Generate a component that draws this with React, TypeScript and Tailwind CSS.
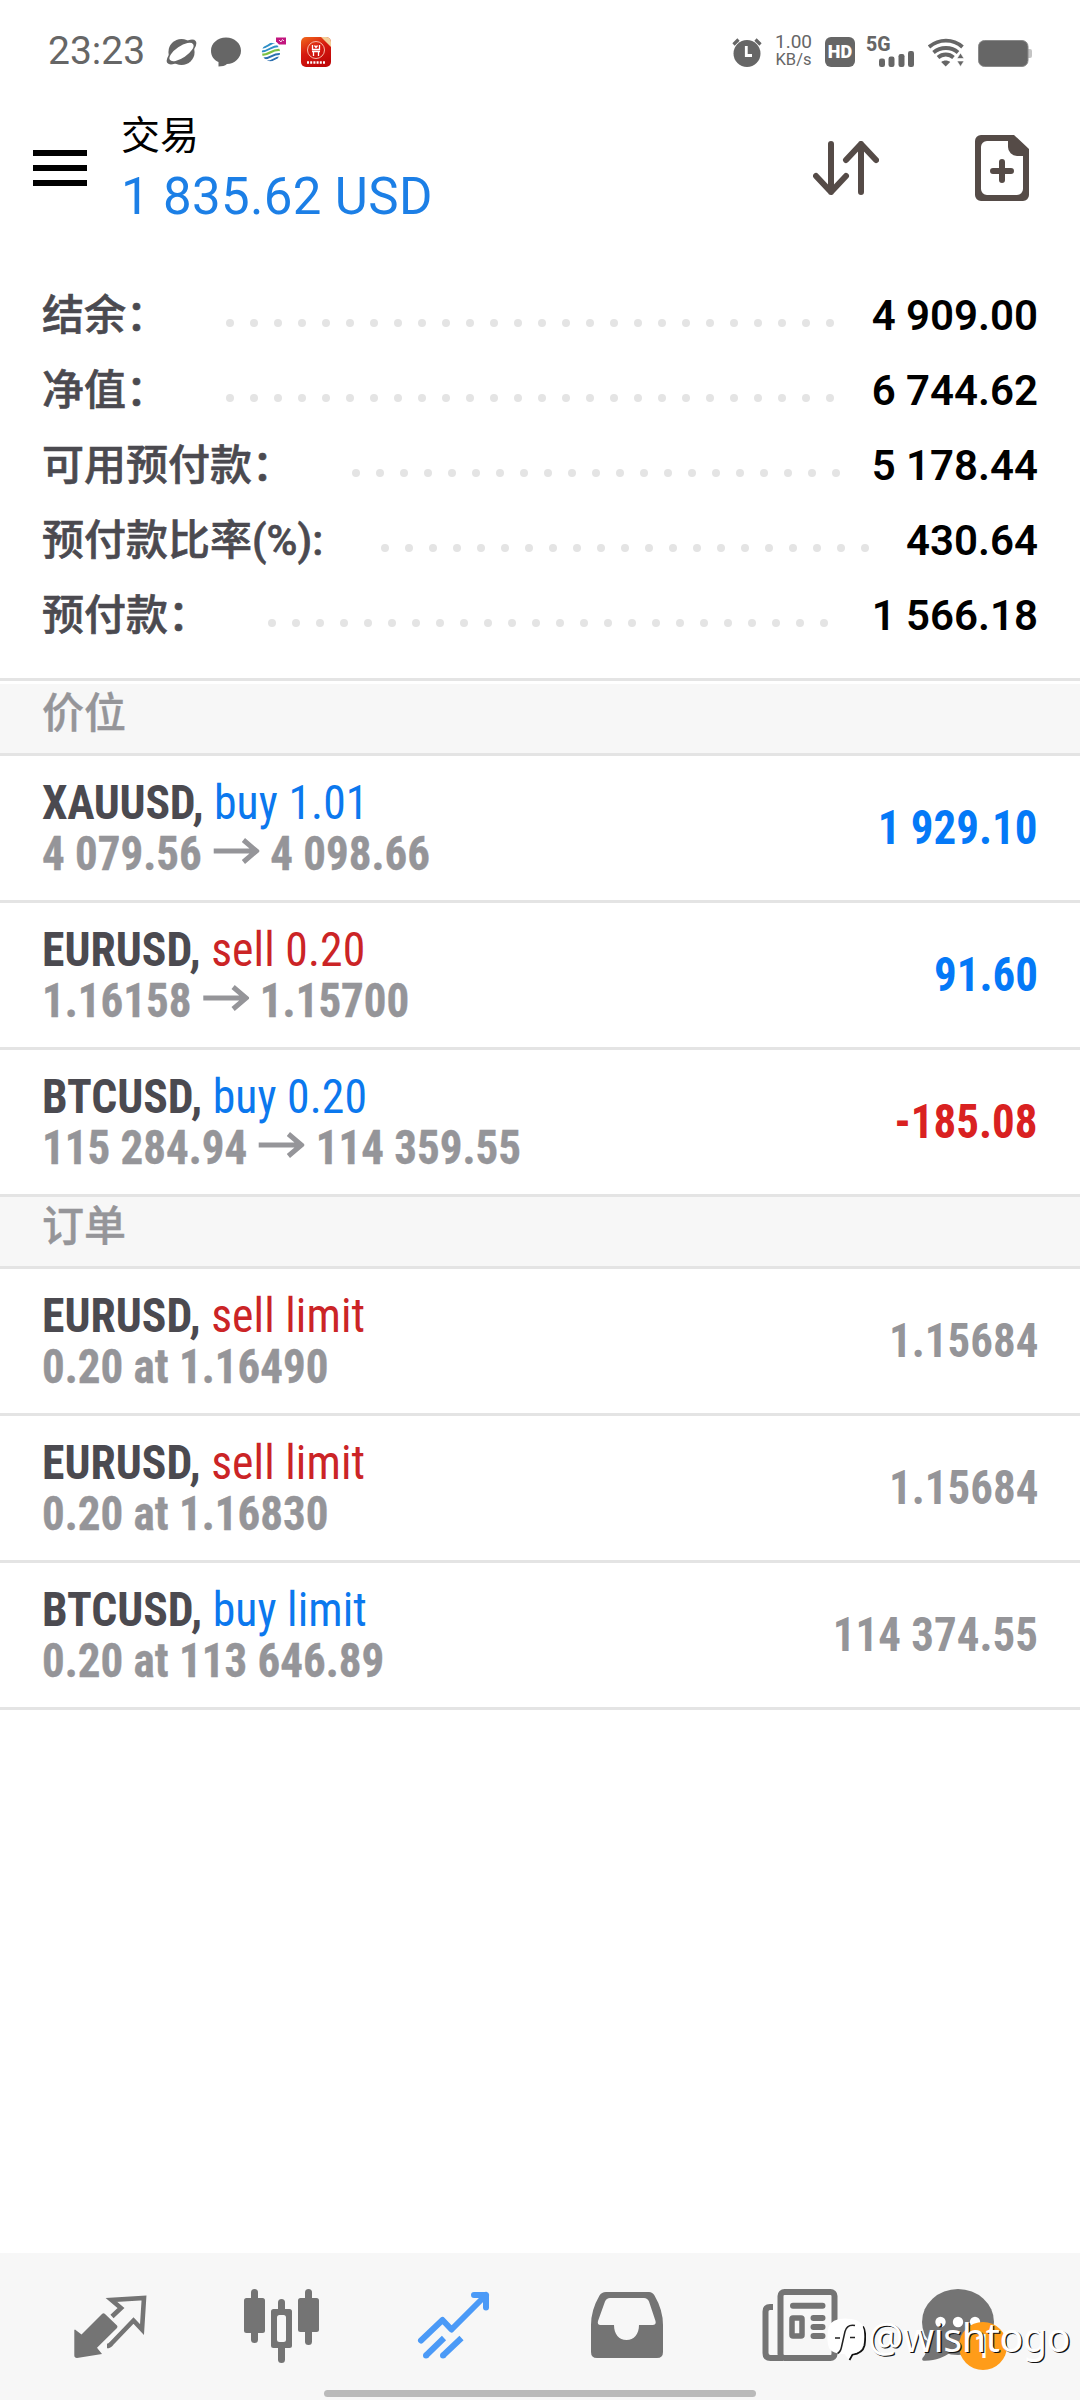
import React from 'react';

type Side = 'buy' | 'sell';

interface SummaryItem {
  label: string;
  value: string;
}

interface Position {
  symbol: string;
  side: Side;
  volume: string;
  open: string;
  current: string;
  profit: string;
}

interface Order {
  symbol: string;
  side: Side;
  details: string;
  price: string;
}

const summary: SummaryItem[] = [
  { label: '结余：', value: '4 909.00' },
  { label: '净值：', value: '6 744.62' },
  { label: '可用预付款：', value: '5 178.44' },
  { label: '预付款比率(%):', value: '430.64' },
  { label: '预付款：', value: '1 566.18' },
];

const positions: Position[] = [
  { symbol: 'XAUUSD', side: 'buy', volume: '1.01', open: '4 079.56', current: '4 098.66', profit: '1 929.10' },
  { symbol: 'EURUSD', side: 'sell', volume: '0.20', open: '1.16158', current: '1.15700', profit: '91.60' },
  { symbol: 'BTCUSD', side: 'buy', volume: '0.20', open: '115 284.94', current: '114 359.55', profit: '-185.08' },
];

const orders: Order[] = [
  { symbol: 'EURUSD', side: 'sell', details: '0.20 at 1.16490', price: '1.15684' },
  { symbol: 'EURUSD', side: 'sell', details: '0.20 at 1.16830', price: '1.15684' },
  { symbol: 'BTCUSD', side: 'buy', details: '0.20 at 113 646.89', price: '114 374.55' },
];

const sideColor: Record<Side, string> = {
  buy: 'text-[#0b78ee]',
  sell: 'text-[#cb2426]',
};

const StatusBar: React.FC = () => (
  <div className="flex h-[103px] items-center justify-between pl-12 pr-12 text-[#666666]">
    <div className="flex items-center">
      <span className="w-[118px] text-[39px] leading-none">23:23</span>
      <svg className="mr-[14px] h-[30px] w-[31px]" viewBox="0 0 32 30">
        <circle cx="16" cy="15" r="13.5" fill="#666" />
        <ellipse cx="16" cy="15" rx="18.5" ry="7.500" fill="#666" transform="rotate(-38 16 15)" />
        <ellipse cx="16" cy="15" rx="14.5" ry="6" fill="#fff" transform="rotate(-34 16 15)" />
      </svg>
      <svg className="mr-5 h-[30px] w-[30px]" viewBox="0 0 30 30">
        <path d="M15 .5C23.500.5 30 6.500 30 13.700S23.500 27 16 27c-2 1.800-5 2.500-8.500 2.500V25C3 23 0 19 0 13.700 0 6.500 6.500.5 15 .5z" fill="#666" />
      </svg>
      <svg className="mr-[14px] h-[30px] w-[26px]" viewBox="0 0 26 30">
        <defs>
          <clipPath id="globe">
            <circle cx="10" cy="15" r="9.200" />
          </clipPath>
        </defs>
        <g fill="none" strokeWidth="2" clipPath="url(#globe)">
          <path d="M0 11c7 0 7-5 16-6M0 14.500c9 0 9-6 19-5.500" stroke="#2f8fc6" />
          <path d="M0 18c10 0 10-6.500 20-5" stroke="#7cc043" strokeWidth="2.400" />
          <path d="M2 21.500c9 0 9-5.500 18-4.500M6 24.500c6 0 7-4 13-4" stroke="#2b6fb0" />
        </g>
        <path d="M15 .5h10v7H18l-3-3z" fill="#c2157e" />
        <path d="M18 3l2 2 1.500-2.500L23 4" stroke="#fff" strokeWidth=".8" fill="none" />
      </svg>
      <svg className="h-[30px] w-[30px]" viewBox="0 0 30 30">
        <defs>
          <linearGradient id="bank" x1="0" y1="0" x2=".5" y2="1">
            <stop offset="0" stopColor="#f26a1b" />
            <stop offset=".5" stopColor="#d61a10" />
            <stop offset="1" stopColor="#c00808" />
          </linearGradient>
        </defs>
        <rect width="30" height="30" rx="5" fill="url(#bank)" />
        <path d="M20 0h5a5 5 0 015 5v5z" fill="#f3cf9a" />
        <circle cx="15" cy="13" r="8.500" fill="none" stroke="#f8b9a8" strokeWidth="1" />
        <path d="M11.500 8v4.500h7V8M13.500 8.500l1.500 2 1.500-2M11 14.500h8M12.500 14.500v4.500M17.500 14.500v4.500" fill="none" stroke="#fff" strokeWidth="1.300" />
        <path d="M6 25.500h18" stroke="#fff" strokeWidth="2.600" strokeDasharray="2 1.200" />
      </svg>
    </div>

    <div className="flex items-center">
      <svg className="mr-[13px] h-[30px] w-[30px]" viewBox="0 0 30 30">
        <circle cx="15" cy="16.500" r="13.500" fill="#666" />
        <path d="M1.500 7.500l5-5M28.500 7.500l-5-5" stroke="#666" strokeWidth="3.200" />
        <path d="M14.300 9v9.500H20" fill="none" stroke="#fff" strokeWidth="2.800" />
      </svg>
      <div className="mr-[13px] flex w-[37px] flex-col items-center">
        <span className="text-[19px] leading-[16px]">1.00</span>
        <span className="text-[16.500px] leading-[19px]">KB/s</span>
      </div>
      <div className="mr-3 flex h-[30px] w-[30px] items-center justify-center rounded-[6px] bg-[#666666] text-[18px] font-black leading-none text-white">
        HD
      </div>
      <div className="relative mr-[14px] h-[30px] w-[47px]">
        <span className="absolute -left-px top-0 text-[19.500px] font-extrabold leading-[16px]">5G</span>
        <svg className="h-[30px] w-[47px]" viewBox="0 0 47 30">
          <g fill="#666">
            <rect x="12" y="21.500" width="6" height="8.500" rx="2.200" />
            <rect x="21.500" y="19.500" width="6" height="10.500" rx="2.200" />
            <rect x="31.500" y="17" width="6" height="13" rx="2.200" />
            <rect x="41" y="14" width="6" height="16" rx="2.200" />
          </g>
        </svg>
      </div>
      <svg className="mr-[14px] h-[30px] w-[36px]" viewBox="0 0 36 30">
        <g fill="none" stroke="#666" strokeWidth="3.800">
          <path d="M1 10C11 1.500 25 1.500 34.500 10" />
          <path d="M5.500 15.500c7-6 18-6 24.500 0" />
          <path d="M10 20.500c4.500-4 11-4 15.500 0" />
        </g>
        <path d="M17.700 29.500l-4.500-4.500c2.500-2 6.500-2 9 0z" fill="#666" />
        <path d="M28 19.500h9v11h-9z" fill="#fff" />
        <path d="M32.500 16l3.500 5.500h-7zM32.500 29.500l3.500-5.500h-7z" fill="#666" stroke="#fff" strokeWidth=".6" />
      </svg>
      <svg className="h-[30px] w-[54px]" viewBox="0 0 54 30">
        <path d="M50 12h2a2 2 0 012 2v5a2 2 0 01-2 2h-2z" fill="#c4c4c4" />
        <rect x="0.500" y="3.500" width="49.500" height="26" rx="6" fill="#666" stroke="#8a8a8a" />
      </svg>
    </div>
  </div>
);

const Header: React.FC = () => (
  <header className="flex h-[130px] items-center pl-[33px] pr-[51px]">
    <button className="flex w-[54px] flex-col gap-[9px]" aria-label="Menu">
      <span className="h-[6px] w-full bg-black" />
      <span className="h-[6px] w-full bg-black" />
      <span className="h-[6px] w-full bg-black" />
    </button>
    <div className="ml-[34px] flex-1">
      <h1 className="text-[39px] leading-[57px] text-black">交易</h1>
      <p className="text-[51px] leading-[63px] tracking-[0.35px] text-[#1c7fe6]">1 835.62 USD</p>
    </div>
    <svg className="mr-24 h-[54px] w-[66px]" viewBox="0 0 66 54" fill="none" stroke="#554b47" strokeWidth="6" strokeLinecap="round" strokeLinejoin="round">
      <path d="M18 3v48M3 35l15 16 15-16M48 51V3M33 19L48 3l15 16" />
    </svg>
    <svg className="h-[66px] w-[54px]" viewBox="0 0 54 66">
      <path
        fillRule="evenodd"
        fill="#554b47"
        d="M6 0h33l15 14v46a6 6 0 01-6 6H6a6 6 0 01-6-6V6a6 6 0 016-6zm6 6a6 6 0 00-6 6v42a6 6 0 006 6h30a6 6 0 006-6V21h-6a9 9 0 01-9-9V6z"
      />
      <path d="M18 36h18M27 27v18" stroke="#554b47" strokeWidth="6" strokeLinecap="round" />
    </svg>
  </header>
);

const SummaryRow: React.FC<SummaryItem> = ({ label, value }) => (
  <div className="flex h-[75px] text-[42px] leading-[75px]">
    <span className="font-medium text-[#4b4a50] [-webkit-text-stroke:0.6px_#4b4a50]">{label}</span>
    {/* dots wrap onto a hidden second line, so only whole ones show */}
    <div className="ml-[58px] mr-[23px] mt-[41px] flex h-2 flex-1 flex-wrap gap-x-4 gap-y-4 overflow-hidden">
      {Array.from({ length: 30 }, (_, i) => (
        <span key={i} className="h-2 w-2 rounded-full bg-[#e4e4e4]" />
      ))}
    </div>
    <span className="font-semibold text-black">{value}</span>
  </div>
);

const SectionTitle: React.FC<{ children: React.ReactNode }> = ({ children }) => (
  <h2 className="h-[72px] border-b-[3px] border-[#e4e4e4] bg-[#f7f7f7] px-[42px] pt-[6px] text-[42px] font-medium leading-[48px] text-[#959599] [-webkit-text-stroke:0.4px_#959599]">
    {children}
  </h2>
);

interface RowProps {
  symbol: string;
  side: Side;
  action: string;
  value: string;
  valueColor: string;
  children: React.ReactNode;
}

const Row: React.FC<RowProps> = ({ symbol, side, action, value, valueColor, children }) => (
  <div className="flex h-[147px] items-center justify-between border-b-[3px] border-[#e4e4e4] px-[42px] font-['Roboto_Condensed'] text-[48px] font-bold leading-[51px]">
    <div>
      <p className="origin-left scale-x-[0.951] text-[#4b4a50]">
        <span className={symbol.startsWith('XAU') ? 'tracking-[-0.3px]' : ''}>{symbol},</span>{' '}
        <span className={`font-normal tracking-[0.1px] ${sideColor[side]}`}>{action}</span>
      </p>
      <p className="flex origin-left scale-x-[0.937] text-[#959599] [-webkit-text-stroke:0.4px_#959599]">{children}</p>
    </div>
    <span className={`mb-[2px] origin-right scale-x-[0.937] ${valueColor}`}>{value}</span>
  </div>
);

const RightArrow: React.FC = () => (
  <svg className="mx-3 h-[46px] w-[49px]" viewBox="0 0 46 46" preserveAspectRatio="none" fill="none" stroke="#959599" strokeWidth="5">
    <path d="M0 23h43M30 12l13 11-13 11" />
  </svg>
);

const NavBar: React.FC = () => (
  <nav className="relative flex h-[147px] justify-between bg-[#f7f7f7] px-[65px] pt-7">
    <svg className="h-[90px] w-[90px]" viewBox="0 0 90 90">
      <path d="M10 48.500l6.500 5L37 33q1.500-1.500 3 0l12 11.500q1 1.200 0 2.400L32 66.700l5 6.300L12 77q-2.700 0-2.700-2.700V49z" fill="#747474" />
      <path d="M47 35.500l9-8.500-9.500-8L79 17l-2 31.500-8.500-9L46.500 62.500q-2 2.500-4.500 2.500" fill="none" stroke="#747474" strokeWidth="4.600" />
    </svg>
    <svg className="h-[90px] w-[90px]" viewBox="0 0 90 90" fill="#747474">
      <rect x="14" y="8" width="7" height="54" rx="3.500" />
      <rect x="7" y="17" width="21" height="35" rx="2.500" />
      <rect x="68" y="8" width="7" height="56" rx="3.500" />
      <rect x="61" y="17" width="21" height="34" rx="2.500" />
      <rect x="41" y="18" width="7" height="64" rx="3.500" />
      <rect x="34" y="28" width="21" height="39" rx="2.500" />
      <rect x="40" y="34" width="9" height="27" rx="2.500" fill="#f7f7f7" />
    </svg>
    <svg className="h-[90px] w-[90px]" viewBox="0 0 90 90" fill="none" stroke="#4b9af7" strokeWidth="6">
      <path d="M12 59.500L33.500 39l9 9.500L77 14M65 14h12v12.500" strokeLinecap="round" strokeLinejoin="round" />
      <path d="M35 57L17 74.500M52.500 57L34 74.500" />
      <circle cx="17" cy="74.500" r="3" fill="#4b9af7" stroke="none" />
      <circle cx="34" cy="74.500" r="3" fill="#4b9af7" stroke="none" />
    </svg>
    <svg className="h-[90px] w-[90px]" viewBox="0 0 90 90">
      <path
        fillRule="evenodd"
        fill="#747474"
        d="M25 11h43q3.500 0 5.500 3.500Q82 29 82 44v27q0 6-6 6H16q-6 0-6-6V44q0-15 8.500-29.500Q20.500 11 25 11zM29 17q-3.500 0-5 3.500L17 40q-1 4 2.500 4H33c0 9 5 15 12.500 15S58 53 58 44h13.500q4 0 3-4l-6.500-19.500Q66.500 17 63 17z"
      />
    </svg>
    <svg className="h-[90px] w-[90px]" viewBox="0 0 90 90" fill="none" stroke="#747474" strokeWidth="6">
      <rect x="27.500" y="11" width="54" height="66" rx="4" />
      <path d="M20 26h-3q-4.500 0-4.500 4.500V72q0 5 5 5H30" />
      <path d="M40 24.800h29.500M60.500 37h9M60.500 46h9M60.500 55h9" strokeLinecap="round" />
      <rect x="39" y="37" width="10" height="18" rx="1" strokeWidth="5.500" />
    </svg>
    <div className="relative h-[90px] w-[90px]">
      <svg className="h-[90px] w-[90px] overflow-visible" viewBox="0 0 90 90">
        <ellipse cx="33" cy="41" rx="36" ry="33" fill="#747474" />
        <path d="M-1 58c3 8 3 15-1.500 19-.8 1.800 0 2.800 1.500 2.700 12 .3 20-4 26-8z" fill="#747474" />
        <circle cx="15.500" cy="41" r="5.200" fill="#fff" />
        <circle cx="33" cy="41" r="5.200" fill="#fff" />
        <circle cx="50" cy="41" r="5.200" fill="#fff" />
      </svg>
      <span className="absolute left-[34px] top-[41px] flex h-12 w-12 items-center justify-center rounded-full bg-[#ff9c19] text-[34px] leading-none text-white">
        1
      </span>
    </div>

    <div className="absolute bottom-[3px] left-[324px] h-[7px] w-[432px] rounded-full bg-[#bababa]" />

    <div className="absolute right-[10px] top-[56px] flex items-center">
      <svg className="mr-[2px] mt-1 h-[46px] w-[40px]" viewBox="0 0 40 46">
        <path d="M22.500 43l3-5.500q10-1 12-9 2-14-1.500-19" transform="translate(1 1)" fill="none" stroke="#111" strokeWidth="1.800" />
        <path d="M19 2.500q13.500 0 17 6 3.500 8 1 20-2 8.500-11.500 9.500l-3 5.500-4-5.500q-12 0-15.500-6Q0 24 2.500 11 5.500 2.500 19 2.500z" fill="#fff" />
        <path d="M29 9.500q-8-1.500-10 6L15.500 31q-1 5-4 6.500M9 22h5M24 21.500h5" fill="none" stroke="#222" strokeWidth="1.500" />
      </svg>
      <span className="font-['Noto_Sans'] text-[39.500px] font-normal leading-[56px] tracking-[-0.5px] text-white [text-shadow:1.300px_1.300px_0_#111]">@wishtogo</span>
    </div>
  </nav>
);

export default function App() {
  return (
    <div className="flex h-[2400px] w-[1080px] flex-col overflow-hidden bg-white font-['Roboto','Noto_Sans_CJK_SC',sans-serif]">
      <StatusBar />
      <Header />

      <section className="border-b-[3px] border-[#e4e4e4] px-[42px] pb-[25px] pt-[45px]">
        {summary.map((item) => (
          <SummaryRow key={item.label} {...item} />
        ))}
      </section>

      <main className="flex-1 pt-[3px]">
        <SectionTitle>价位</SectionTitle>
        {positions.map((p) => (
          <Row
            key={p.symbol}
            symbol={p.symbol}
            side={p.side}
            action={`${p.side} ${p.volume}`}
            value={p.profit}
            valueColor={p.profit.startsWith('-') ? 'text-[#d92121]' : 'text-[#0479f7]'}
          >
            {p.open}
            <RightArrow />
            {p.current}
          </Row>
        ))}

        <SectionTitle>订单</SectionTitle>
        {orders.map((o) => (
          <Row key={o.details} symbol={o.symbol} side={o.side} action={`${o.side} limit`} value={o.price} valueColor="text-[#959599]">
            {o.details}
          </Row>
        ))}
      </main>

      <NavBar />
    </div>
  );
}
